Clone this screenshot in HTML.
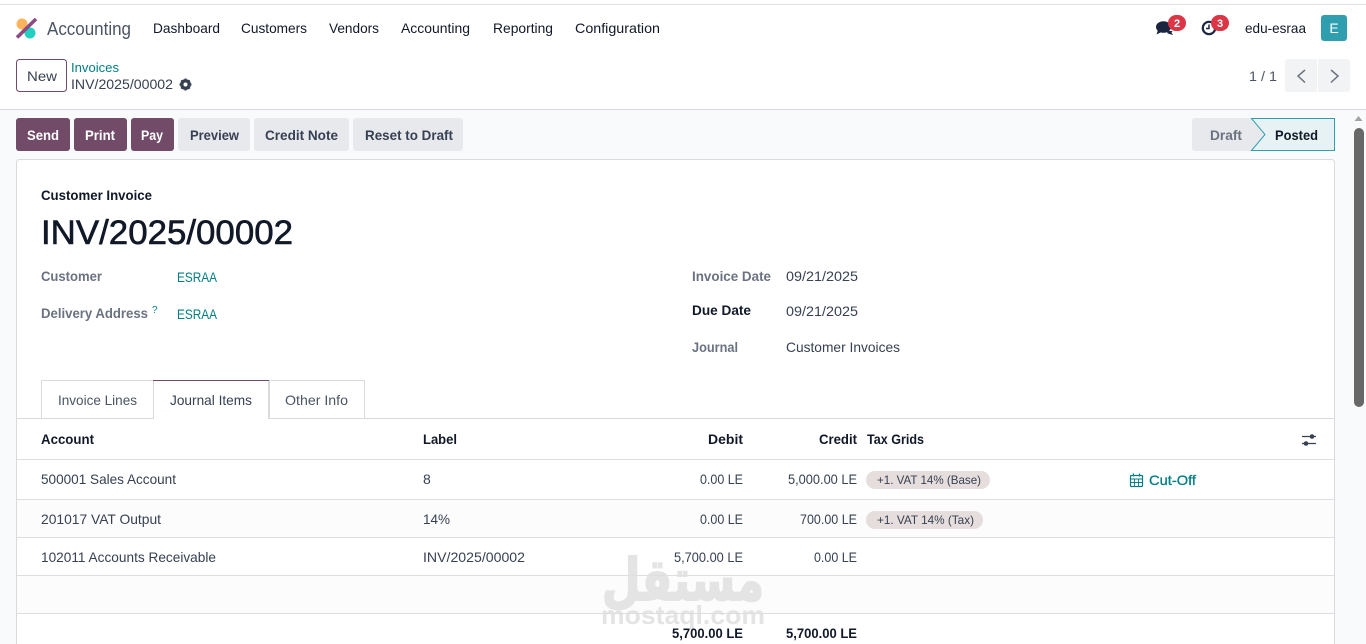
<!DOCTYPE html>
<html lang="en">
<head>
<meta charset="utf-8">
<title>INV/2025/00002 - Accounting</title>
<style>
html,body{margin:0;padding:0;width:1366px;height:644px;overflow:hidden;background:#fff}
svg{display:block;font-family:"Liberation Sans",sans-serif;font-size:14px}
.t{fill:#374151}
.d{fill:#111827}
.b{font-weight:700}
.l{fill:#017e84}
.m{fill:#4b5563}
.g{fill:#6b7280}
.w{fill:#fff;font-weight:700}
</style>
</head>
<body>
<svg width="1366" height="644" viewBox="0 0 1366 644" xmlns="http://www.w3.org/2000/svg">
<!-- page backgrounds -->
<rect width="1366" height="644" fill="#fff"/>
<rect y="4" width="1366" height="1" fill="#dee2e6"/>
<rect y="110" width="1366" height="534" fill="#f9fafb"/>
<rect y="109" width="1366" height="1" fill="#d8dadd"/>

<!-- navbar -->
<g>
<circle cx="22" cy="24" r="5.500" fill="#fbb45c"/>
<circle cx="30" cy="33" r="5.500" fill="#21d0c0"/>
<path d="M17 37.500L36 19" stroke="#8d4a84" stroke-width="3.600"/>
<text x="47" y="35" font-size="18" textLength="84" lengthAdjust="spacingAndGlyphs" fill="#4b5563">Accounting</text>
<text x="153" y="33" class="d" textLength="67" lengthAdjust="spacingAndGlyphs">Dashboard</text>
<text x="241" y="33" class="d" textLength="66" lengthAdjust="spacingAndGlyphs">Customers</text>
<text x="329" y="33" class="d" textLength="50" lengthAdjust="spacingAndGlyphs">Vendors</text>
<text x="401" y="33" class="d" textLength="69" lengthAdjust="spacingAndGlyphs">Accounting</text>
<text x="493" y="33" class="d" textLength="60" lengthAdjust="spacingAndGlyphs">Reporting</text>
<text x="575" y="33" class="d" textLength="85" lengthAdjust="spacingAndGlyphs">Configuration</text>
</g>

<!-- systray -->
<g>
<ellipse cx="1163.500" cy="27" rx="7.500" ry="5.800" fill="#1a2640"/>
<path d="M1158 30l-1.500 4.500 6-3zM1166 31h6.500l-1 1.500 1.500 2.500-5-1.500z" fill="#1a2640"/>
<rect x="1168" y="15" width="18" height="16" rx="8" fill="#dc3545"/>
<text x="1177" y="27" text-anchor="middle" font-size="11" class="w">2</text>
<circle cx="1209" cy="28" r="6.200" fill="none" stroke="#1a2640" stroke-width="2.200"/>
<path d="M1209 24.500v4h-3" fill="none" stroke="#1a2640" stroke-width="1.500"/>
<rect x="1211" y="15" width="18" height="16" rx="8" fill="#dc3545"/>
<text x="1220" y="27" text-anchor="middle" font-size="11" class="w">3</text>
<text x="1245" y="33" class="d" textLength="61" lengthAdjust="spacingAndGlyphs">edu-esraa</text>
<rect x="1321" y="15" width="26" height="26" rx="3" fill="#2f9fb0"/>
<text x="1334" y="33" text-anchor="middle" font-size="14" fill="#fff">E</text>
</g>

<!-- control panel -->
<g>
<rect x="16.500" y="59.500" width="50" height="32" rx="3" fill="#fff" stroke="#714b67"/>
<text x="27" y="81" class="t" textLength="30" lengthAdjust="spacingAndGlyphs">New</text>
<text x="71" y="72" class="l" font-size="13" textLength="48" lengthAdjust="spacingAndGlyphs">Invoices</text>
<text x="71" y="89" class="t" textLength="102" lengthAdjust="spacingAndGlyphs">INV/2025/00002</text>
<circle cx="185.500" cy="84.500" r="3.700" fill="none" stroke="#374151" stroke-width="3.400"/>
<g stroke="#374151" stroke-width="2"><path d="M185.500 78.500v2M185.500 88.500v2M179.500 84.500h2M189.500 84.500h2M181.300 80.300l1.400 1.400M188.300 87.300l1.400 1.400M181.300 88.700l1.400-1.400M188.300 81.700l1.400-1.400"/></g>
<text x="1249" y="81" class="m" textLength="28" lengthAdjust="spacingAndGlyphs">1 / 1</text>
<path d="M1285 62a3 3 0 0 1 3-3h29v33h-29a3 3 0 0 1-3-3z" fill="#f2f3f4"/>
<path d="M1318 59h29a3 3 0 0 1 3 3v27a3 3 0 0 1-3 3h-29z" fill="#f2f3f4"/>
<path d="M1305 70l-7 6 7 6.500M1331 70l7 6-7 6.500" fill="none" stroke="#6b7280" stroke-width="1.500"/>
</g>

<!-- action buttons -->
<g>
<rect x="16" y="118" width="54" height="33" rx="3" fill="#714b67"/>
<text x="27" y="140" class="w" textLength="32" lengthAdjust="spacingAndGlyphs">Send</text>
<rect x="74" y="118" width="53" height="33" rx="3" fill="#714b67"/>
<text x="85" y="140" class="w" textLength="30" lengthAdjust="spacingAndGlyphs">Print</text>
<rect x="131" y="118" width="43" height="33" rx="3" fill="#714b67"/>
<text x="141" y="140" class="w" textLength="22" lengthAdjust="spacingAndGlyphs">Pay</text>
<rect x="178" y="118" width="72" height="33" rx="3" fill="#e7e9ed"/>
<text x="190" y="140" class="t b" textLength="49" lengthAdjust="spacingAndGlyphs">Preview</text>
<rect x="254" y="118" width="95" height="33" rx="3" fill="#e7e9ed"/>
<text x="265" y="140" class="t b" textLength="73" lengthAdjust="spacingAndGlyphs">Credit Note</text>
<rect x="353" y="118" width="110" height="33" rx="3" fill="#e7e9ed"/>
<text x="365" y="140" class="t b" textLength="88" lengthAdjust="spacingAndGlyphs">Reset to Draft</text>
</g>

<!-- statusbar -->
<g>
<path d="M1195 118h56l14 16.500-14 16.500h-56a3 3 0 0 1-3-3v-27a3 3 0 0 1 3-3z" fill="#e7e9ed"/>
<path d="M1251.500 118.500h83v32h-83l13.500-16z" fill="#e6f2f3" stroke="#2f9fb0"/>
<text x="1210" y="140" class="g b" textLength="32" lengthAdjust="spacingAndGlyphs">Draft</text>
<text x="1275" y="140" class="b" fill="#111827" textLength="43" lengthAdjust="spacingAndGlyphs">Posted</text>
</g>

<!-- scrollbar -->
<path d="M1358.500 116l-4 5h8z" fill="#a3a3a3"/>
<rect x="1354" y="128" width="10" height="279" rx="5" fill="#686868"/>

<!-- sheet -->
<rect x="16.500" y="159.500" width="1318" height="491" rx="3" fill="#fff" stroke="#d8dadd"/>
<text x="41" y="200" class="d b" font-size="13.500" textLength="111" lengthAdjust="spacingAndGlyphs">Customer Invoice</text>
<text x="41" y="244" fill="#111827" stroke="#111827" stroke-width=".6" font-size="34" textLength="252" lengthAdjust="spacingAndGlyphs">INV/2025/00002</text>

<text x="41" y="281" class="g b" textLength="61" lengthAdjust="spacingAndGlyphs">Customer</text>
<text x="177" y="282" class="l" textLength="40" lengthAdjust="spacingAndGlyphs">ESRAA</text>
<text x="41" y="318" class="g b" textLength="107" lengthAdjust="spacingAndGlyphs">Delivery Address</text>
<text x="152" y="313" font-size="10" class="l">?</text>
<text x="177" y="319" class="l" textLength="40" lengthAdjust="spacingAndGlyphs">ESRAA</text>

<text x="692" y="281" class="g b" textLength="79" lengthAdjust="spacingAndGlyphs">Invoice Date</text>
<text x="786" y="281" class="t" textLength="72" lengthAdjust="spacingAndGlyphs">09/21/2025</text>
<text x="692" y="315" class="d b" textLength="59" lengthAdjust="spacingAndGlyphs">Due Date</text>
<text x="786" y="316" class="t" textLength="72" lengthAdjust="spacingAndGlyphs">09/21/2025</text>
<text x="692" y="352" class="g b" textLength="46" lengthAdjust="spacingAndGlyphs">Journal</text>
<text x="786" y="352" class="t" textLength="114" lengthAdjust="spacingAndGlyphs">Customer Invoices</text>

<!-- tabs -->
<rect x="17" y="418" width="1317" height="1" fill="#d8dadd"/>
<rect x="41.500" y="380.500" width="112" height="38" fill="#fff" stroke="#d8dadd"/>
<rect x="269.500" y="380.500" width="95" height="38" fill="#fff" stroke="#d8dadd"/>
<rect x="153.500" y="380.500" width="115" height="39" fill="#fff" stroke="none"/>
<path d="M153.500 419v-38M268.500 419v-38" stroke="#d8dadd"/>
<rect x="153" y="380" width="116" height="1" fill="#714b67"/>
<text x="58" y="405" class="m" textLength="79" lengthAdjust="spacingAndGlyphs">Invoice Lines</text>
<text x="170" y="405" class="t" textLength="82" lengthAdjust="spacingAndGlyphs">Journal Items</text>
<text x="285" y="405" class="m" textLength="63" lengthAdjust="spacingAndGlyphs">Other Info</text>

<!-- table -->
<text x="41" y="444" class="d b" textLength="53" lengthAdjust="spacingAndGlyphs">Account</text>
<text x="423" y="444" class="d b" textLength="34" lengthAdjust="spacingAndGlyphs">Label</text>
<text x="708" y="444" class="d b" textLength="35" lengthAdjust="spacingAndGlyphs">Debit</text>
<text x="819" y="444" class="d b" textLength="38" lengthAdjust="spacingAndGlyphs">Credit</text>
<text x="867" y="444" class="d b" textLength="57" lengthAdjust="spacingAndGlyphs">Tax Grids</text>
<g stroke="#374151" stroke-width="1.300"><path d="M1302 436.500h14M1302 443.500h14"/></g>
<circle cx="1312" cy="436.500" r="2.300" fill="#374151"/><circle cx="1306" cy="443.500" r="2.300" fill="#374151"/>

<rect x="17" y="500" width="1317" height="38" fill="#fcfcfc"/>
<rect x="17" y="576" width="1317" height="37" fill="#fcfcfc"/>

<!-- watermark -->
<text x="683" y="600" text-anchor="middle" font-family="DejaVu Sans,sans-serif" font-weight="700" font-size="58" fill="#e4e4e4" stroke="#e4e4e4" stroke-width="2" textLength="162" lengthAdjust="spacingAndGlyphs" direction="rtl">مستقل</text>
<text x="601" y="624" font-size="26" font-weight="700" fill="#e4e4e4" textLength="164" lengthAdjust="spacingAndGlyphs">mostaql.com</text>

<g fill="#dcdee1">
<rect x="17" y="459" width="1317" height="1"/>
<rect x="17" y="499" width="1317" height="1"/>
<rect x="17" y="537" width="1317" height="1"/>
<rect x="17" y="575" width="1317" height="1"/>
<rect x="17" y="613" width="1317" height="1"/>
</g>

<!-- row 1 -->
<text x="41" y="484" class="t" textLength="135" lengthAdjust="spacingAndGlyphs">500001 Sales Account</text>
<text x="423" y="484" class="t">8</text>
<text x="700" y="484" class="t" textLength="43" lengthAdjust="spacingAndGlyphs">0.00 LE</text>
<text x="788" y="484" class="t" textLength="69" lengthAdjust="spacingAndGlyphs">5,000.00 LE</text>
<rect x="866" y="471" width="124" height="18" rx="9" fill="#e6dddd"/>
<text x="877" y="484" font-size="12" class="t" textLength="104" lengthAdjust="spacingAndGlyphs">+1. VAT 14% (Base)</text>
<g fill="none" stroke="#017e84" stroke-width="1.200"><rect x="1130.500" y="475.500" width="12" height="11" rx="1"/><path d="M1130.500 479h12M1130.500 482.500h12M1134.500 479v7.500M1138.500 479v7.500" stroke-width=".9"/><path d="M1133.500 473.500v3M1139.500 473.500v3"/></g>
<text x="1149" y="485" class="l" stroke="#017e84" stroke-width=".3" textLength="47" lengthAdjust="spacingAndGlyphs">Cut-Off</text>

<!-- row 2 -->
<text x="41" y="524" class="t" textLength="120" lengthAdjust="spacingAndGlyphs">201017 VAT Output</text>
<text x="423" y="524" class="t" textLength="27" lengthAdjust="spacingAndGlyphs">14%</text>
<text x="700" y="524" class="t" textLength="43" lengthAdjust="spacingAndGlyphs">0.00 LE</text>
<text x="800" y="524" class="t" textLength="57" lengthAdjust="spacingAndGlyphs">700.00 LE</text>
<rect x="866" y="511" width="117" height="18" rx="9" fill="#e6dddd"/>
<text x="877" y="524" font-size="12" class="t" textLength="97" lengthAdjust="spacingAndGlyphs">+1. VAT 14% (Tax)</text>

<!-- row 3 -->
<text x="41" y="562" class="t" textLength="175" lengthAdjust="spacingAndGlyphs">102011 Accounts Receivable</text>
<text x="423" y="562" class="t" textLength="102" lengthAdjust="spacingAndGlyphs">INV/2025/00002</text>
<text x="674" y="562" class="t" textLength="69" lengthAdjust="spacingAndGlyphs">5,700.00 LE</text>
<text x="814" y="562" class="t" textLength="43" lengthAdjust="spacingAndGlyphs">0.00 LE</text>

<!-- totals -->
<text x="672" y="638" class="d b" textLength="71" lengthAdjust="spacingAndGlyphs">5,700.00 LE</text>
<text x="786" y="638" class="d b" textLength="71" lengthAdjust="spacingAndGlyphs">5,700.00 LE</text>
</svg>
</body>
</html>
